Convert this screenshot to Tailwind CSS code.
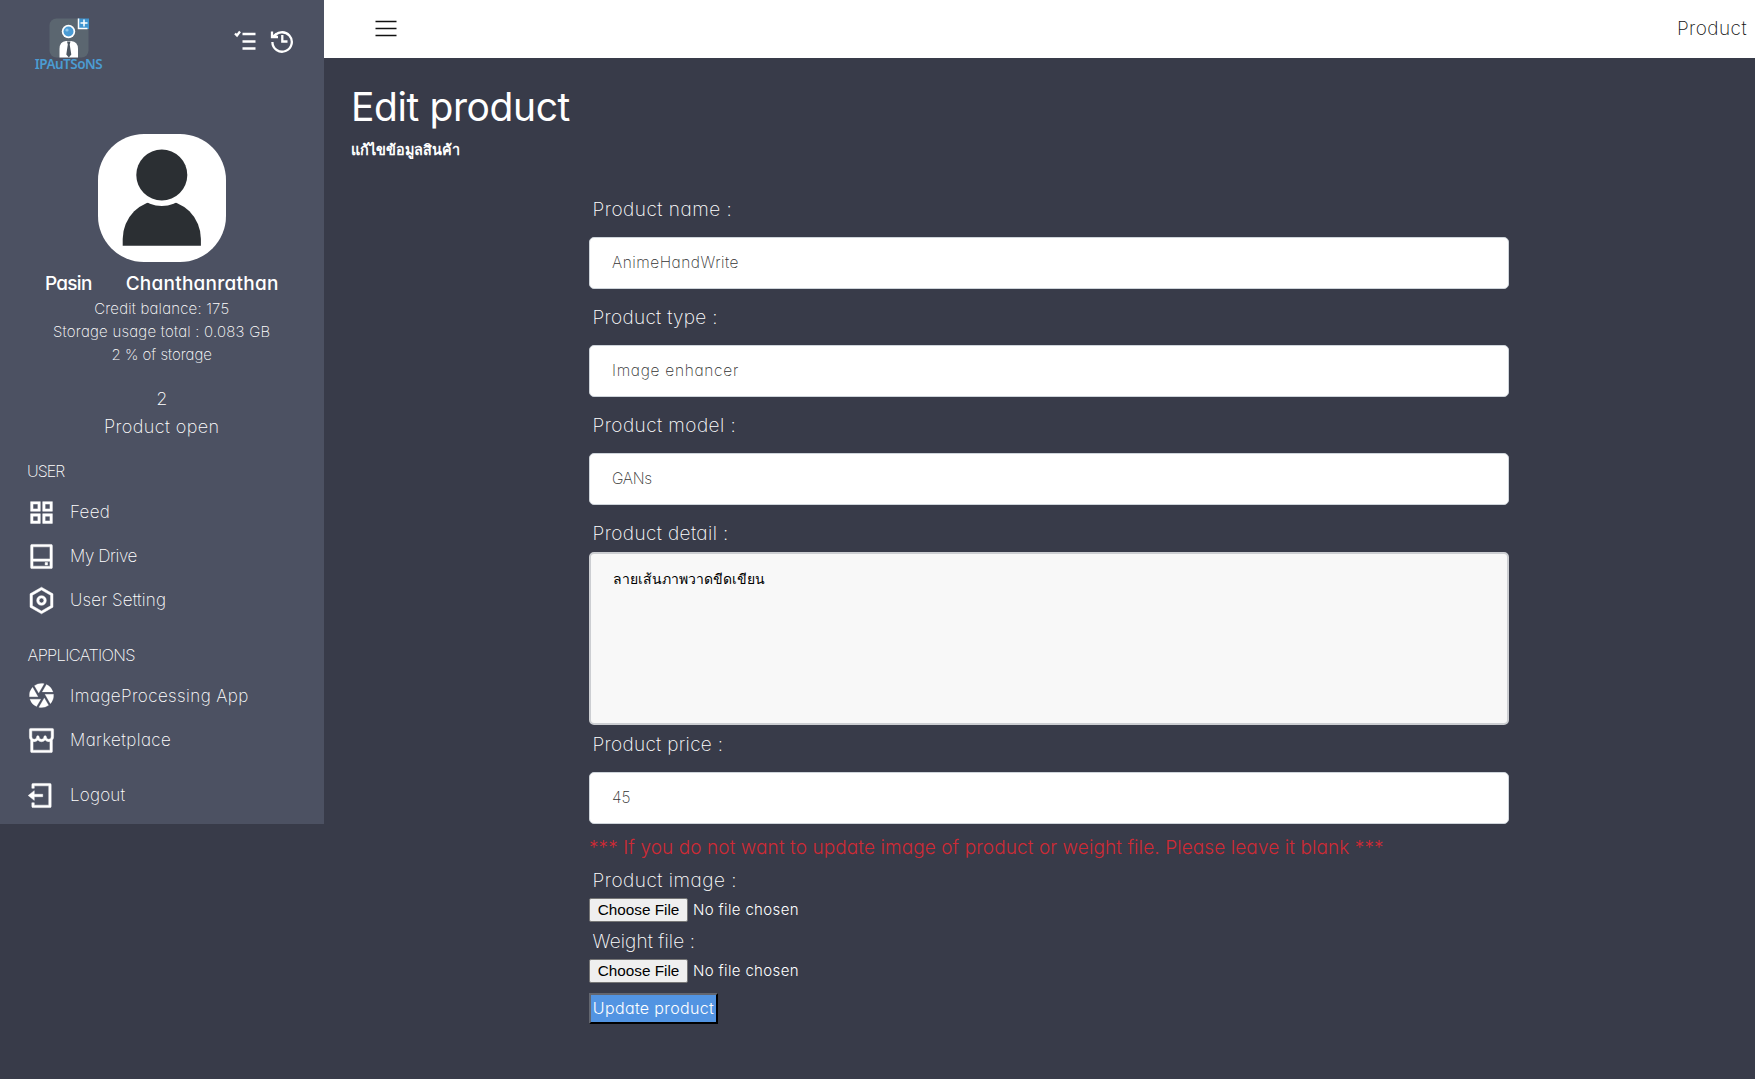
<!DOCTYPE html>
<html lang="en">
<head>
<meta charset="utf-8">
<title>Edit product</title>
<script src="https://cdn.jsdelivr.net/npm/@tailwindcss/browser@4"></script>
</head>
<body class="flex h-[1079px] overflow-hidden bg-[#383b49] font-['Inter',sans-serif] font-extralight text-white [font-feature-settings:'cv11']">

<!-- Sidebar -->
<aside class="flex h-[824px] w-[323.500px] shrink-0 flex-col bg-[#4c5162]">
  <div class="flex h-[134px] justify-between pl-[34px] pr-[30px] whitespace-nowrap">
    <div class="flex w-[69px] flex-col items-center pt-[18px]">
      <svg class="h-[40px] w-[40px] shrink-0" viewBox="0 0 40 40">
        <rect x="0.5" y="0.5" width="39" height="39" rx="7" fill="#5b6670"/>
        <path d="M10.500 39.500V31q0-7.500 6.500-8h5q7 .5 7 8v8.500z" fill="#fff"/>
        <path d="M18 23.500h3.500l-.8 3 1.600 10-2.500 3-2.500-3 1.500-10z" fill="#4b5560"/>
        <circle cx="19.500" cy="13.500" r="6.700" fill="#fff"/>
        <circle cx="19.500" cy="13.500" r="5" fill="#4a9bd4"/>
        <circle cx="18" cy="12" r="1.600" fill="#8fc6ea"/>
        <rect x="29" y="0.500" width="11" height="10.500" fill="#3f94d0"/>
        <path d="M29.500 .5v10h9M35 1.500v7M31.500 5h7" fill="none" stroke="#fff" stroke-width="1.500"/>
      </svg>
      <span class="font-['Noto_Sans'] text-[13.500px] leading-[13px] font-semibold tracking-[-0.5px] text-[#4b9cd3]">IPAuTSoNS</span>
    </div>
    <div class="flex gap-[14px] pt-[29px] text-white">
      <svg class="h-[25px] w-[22px]" viewBox="0 0 22 25" fill="none" stroke="currentColor" stroke-width="2.300">
        <path d="M8.500 5H21.500M8.500 12.500H21.500M8.500 19.500H21.500M1 4.500l2 2 3-4"/>
      </svg>
      <svg class="h-[25px] w-[24px]" viewBox="0 0 24 25" fill="none" stroke="currentColor" stroke-width="2.300">
        <path d="M3.500 8.500A9.700 9.700 0 1 1 2.400 13M2 2.500V8H8M2.500 8L6.500 4.500M12.300 6V12.500H17.500"/>
      </svg>
    </div>
  </div>

  <div class="flex flex-col items-center">
    <svg class="h-[128px] w-[128px] rounded-[46px] bg-white" viewBox="0 0 128 128">
      <path d="M24.700 111.700V105a39.100 39.100 0 0 1 78.200 0v6.700z" fill="#2b2f33"/>
      <circle cx="63.800" cy="41" r="31" fill="#fff"/>
      <circle cx="63.800" cy="41" r="25.500" fill="#2b2f33"/>
    </svg>
    <div class="mt-[8px] flex h-[27px] gap-[34px] text-[19px] leading-[28px] font-medium">
      <span class="tracking-[-0.7px]">Pasin</span><span class="tracking-[0.25px]">Chanthanrathan</span>
    </div>
    <div class="text-center text-[15px] leading-[23px]">
      <p class="tracking-[0.2px]">Credit balance: 175</p>
      <p class="tracking-[0.23px]">Storage usage total : 0.083 GB</p>
      <p>2 % of storage</p>
    </div>
    <div class="mt-[19px] text-center text-[18px] leading-[28px]">
      <p>2</p>
      <p class="tracking-[0.4px]">Product open</p>
    </div>
  </div>

  <nav class="mt-[16px] flex flex-col pl-[27px] text-[17px] leading-[28px] whitespace-nowrap">
    <h2 class="h-[28px] text-[16px] tracking-[-0.9px]">USER</h2>
    <a class="mt-[5px] flex h-[44px] items-center gap-[14px]">
      <svg class="h-[29px] w-[29px] text-white" viewBox="0 0 24 24" fill="currentColor" stroke="currentColor" stroke-width=".4"><path d="M3 3h8v8H3zM3 13h8v8H3zM13 3h8v8h-8zM13 13h8v8h-8zM5 5v4h4V5zM15 5v4h4V5zM15 15v4h4v-4zM5 15v4h4v-4z" fill-rule="evenodd"/></svg>
      <span class="tracking-[0.3px]">Feed</span>
    </a>
    <a class="flex h-[44px] items-center gap-[14px]">
      <svg class="h-[29px] w-[29px] text-white" viewBox="0 0 24 24" fill="currentColor" stroke="currentColor" stroke-width=".4"><path fill-rule="evenodd" d="M5 14h14V4H5v10zm0 2v4h14v-4H5zM4 2h16a1 1 0 0 1 1 1v18a1 1 0 0 1-1 1H4a1 1 0 0 1-1-1V3a1 1 0 0 1 1-1zm11 15h2v2h-2v-2z"/></svg>
      <span class="tracking-[-0.4px]">My Drive</span>
    </a>
    <a class="flex h-[44px] items-center gap-[14px]">
      <svg class="h-[29px] w-[29px] text-white" viewBox="0 0 24 24" fill="currentColor" stroke="currentColor" stroke-width=".4"><path fill-rule="evenodd" d="M12 1l9.500 5.500v11L12 23l-9.500-5.500v-11L12 1zm0 2.311L4.500 7.653v8.694l7.500 4.342 7.500-4.342V7.653L12 3.311zM12 16a4 4 0 1 1 0-8 4 4 0 0 1 0 8zm0-2a2 2 0 1 0 0-4 2 2 0 0 0 0 4z"/></svg>
      <span class="tracking-[0.15px]">User Setting</span>
    </a>
    <h2 class="mt-[19px] h-[28px] pl-[0.500px] text-[16.500px] tracking-[-0.7px]">APPLICATIONS</h2>
    <a class="mt-[4px] flex h-[45px] items-center gap-[14px]">
      <svg class="h-[29px] w-[29px] text-white" viewBox="0 0 24 24" fill="currentColor" stroke="currentColor" stroke-width=".2"><path d="M9.827 21.763L14.310 14l3.532 6.117A9.955 9.955 0 0 1 12 22c-.746 0-1.473-.082-2.173-.237zM7.890 21.120A10.028 10.028 0 0 1 2.458 15h8.965L7.890 21.119zM2.050 13a9.964 9.964 0 0 1 2.583-7.761L9.112 13H2.050zm4.109-9.117A9.955 9.955 0 0 1 12 2c.746 0 1.473.082 2.173.237L9.690 10 6.159 3.883zM16.110 2.880A10.028 10.028 0 0 1 21.542 9h-8.965l3.533-6.119zM21.950 11a9.964 9.964 0 0 1-2.583 7.761L14.888 11h7.064z"/></svg>
      <span class="tracking-[0.4px]">ImageProcessing App</span>
    </a>
    <a class="flex h-[44px] items-center gap-[14px]">
      <svg class="h-[29px] w-[29px] text-white" viewBox="0 0 24 24" fill="currentColor" stroke="currentColor" stroke-width=".4"><path d="M21 11.646V21a1 1 0 0 1-1 1H4a1 1 0 0 1-1-1v-9.354A3.985 3.985 0 0 1 2 9V3a1 1 0 0 1 1-1h18a1 1 0 0 1 1 1v6c0 1.014-.378 1.940-1 2.646zm-2 1.228a4.007 4.007 0 0 1-4-1.228A3.990 3.990 0 0 1 12 13a3.990 3.990 0 0 1-3-1.354 3.990 3.990 0 0 1-4 1.228V20h14v-7.126zM14 9a1 1 0 0 1 2 0 2 2 0 1 0 4 0V4H4v5a2 2 0 1 0 4 0 1 1 0 1 1 2 0 2 2 0 1 0 4 0z"/></svg>
      <span class="tracking-[0.4px]">Marketplace</span>
    </a>
    <a class="mt-[11px] flex h-[44px] items-center gap-[14px]">
      <svg class="h-[29px] w-[29px] text-white" viewBox="0 0 24 24" fill="currentColor" stroke="currentColor" stroke-width=".4"><path d="M4 18h2v2h12V4H6v2H4V3a1 1 0 0 1 1-1h14a1 1 0 0 1 1 1v18a1 1 0 0 1-1 1H5a1 1 0 0 1-1-1v-3zm2-7h7v2H6v3l-5-4 5-4v3z"/></svg>
      <span class="tracking-[0.2px]">Logout</span>
    </a>
  </nav>
</aside>

<!-- Main area -->
<div class="flex min-w-0 flex-1 flex-col">
  <header class="flex h-[58px] shrink-0 items-center justify-between bg-white pr-[8px] pl-[51.500px] text-[#111]">
    <svg class="h-[24px] w-[22px]" viewBox="0 0 22 24" fill="none" stroke="#111" stroke-width="1.500"><path d="M.5 4.500H21.500M.5 11.500H21.500M.5 18.500H21.500"/></svg>
    <span class="text-[19px] tracking-[0.45px]">Product</span>
  </header>

  <main class="pl-[27.500px]">
    <h1 class="mt-[20px] h-[58px] text-[39px] leading-[58px] font-normal tracking-[-0.4px]">Edit product</h1>
    <p class="mt-[4px] h-[20px] text-[14.400px] leading-[20px] font-bold">แก้ไขข้อมูลสินค้า</p>

    <form class="mt-[22px] ml-[238px] flex w-[920px] flex-col text-[19px] leading-[28px]">
      <label class="mt-[14px] mb-[13px] h-[28px] pl-[3.500px] tracking-[0.5px]">Product name :</label>
      <div class="flex h-[52px] items-center rounded-[5px] border border-[#ced4da] bg-white pl-[22px] text-[15.500px] tracking-[0.5px] text-[#333]">AnimeHandWrite</div>
      <label class="mt-[15px] mb-[13px] h-[28px] pl-[3.500px] tracking-[0.3px]">Product type :</label>
      <div class="flex h-[52px] items-center rounded-[5px] border border-[#ced4da] bg-white pl-[22px] text-[15.500px] tracking-[0.7px] text-[#333]">Image enhancer</div>
      <label class="mt-[15px] mb-[13px] h-[28px] pl-[3.500px] tracking-[0.45px]">Product model :</label>
      <div class="flex h-[52px] items-center rounded-[5px] border border-[#ced4da] bg-white pl-[22px] text-[15.500px] tracking-[-0.3px] text-[#333]">GANs</div>
      <label class="mt-[15px] mb-[4px] h-[28px] pl-[3.500px] tracking-[0.4px]">Product detail :</label>
      <div class="h-[173px] rounded-[5px] border-2 border-[#ccced2] bg-[#f8f8f8] pt-[13px] pl-[22px] text-[14px] leading-[24px] font-normal text-black">ลายเส้นภาพวาดขีดเขียน</div>
      <label class="mt-[6px] mb-[13px] h-[28px] pl-[3.500px] tracking-[0.3px]">Product price :</label>
      <div class="flex h-[52px] items-center rounded-[5px] border border-[#ced4da] bg-white pl-[22px] text-[15.500px] text-[#333]">45</div>
      <p class="mt-[10px] h-[28px] tracking-[0.09px] whitespace-nowrap font-light text-[#cf2a35]">*** If you do not want to update image of product or weight file. Please leave it blank ***</p>
      <label class="mt-[5px] mb-[3px] h-[28px] pl-[3.500px] tracking-[0.5px]">Product image :</label>
      <div class="flex h-[24px] items-center gap-[5px] text-[15px] font-light tracking-[0.35px]">
        <button type="button" class="flex h-[24px] w-[99px] items-center justify-center rounded-[2px] border border-[#767676] bg-[#efefef] pb-px font-['Liberation_Sans'] text-[15.300px] font-normal tracking-normal text-black">Choose File</button><span class="pb-px">No file chosen</span>
      </div>
      <label class="mt-[6px] mb-[3px] h-[28px] pl-[3.500px] tracking-[0.1px]">Weight file :</label>
      <div class="flex h-[24px] items-center gap-[5px] text-[15px] font-light tracking-[0.35px]">
        <button type="button" class="flex h-[24px] w-[99px] items-center justify-center rounded-[2px] border border-[#767676] bg-[#efefef] pb-px font-['Liberation_Sans'] text-[15.300px] font-normal tracking-normal text-black">Choose File</button><span class="pb-px">No file chosen</span>
      </div>
      <button type="button" class="mt-[10px] flex h-[31px] w-[129px] items-center justify-center border-2 border-t-[#63666f] border-r-black border-b-black border-l-[#63666f] bg-[#5294e2] pb-px text-[16px] font-light tracking-[0.35px] whitespace-nowrap">Update product</button>
    </form>
  </main>
</div>
</body>
</html>
